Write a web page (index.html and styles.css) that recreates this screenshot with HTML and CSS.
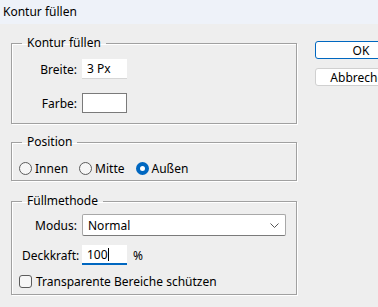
FILE: index.html
```html
<!DOCTYPE html>
<html lang="de">
<head>
    <meta charset="UTF-8">
    <meta name="viewport" content="width=device-width, initial-scale=1.0">
    <title>Kontur füllen</title>
    <link rel="stylesheet" href="styles.css">
</head>
<body>
    <div class="titlebar">Kontur füllen</div>
    <div class="dialog">
        <div class="groups">
            <fieldset class="group group-stroke">
                <legend>Kontur füllen</legend>
                <div class="row">
                    <label class="label">Breite:</label>
                    <div class="field">3 Px</div>
                </div>
                <div class="row">
                    <label class="label">Farbe:</label>
                    <div class="swatch"></div>
                </div>
            </fieldset>

            <fieldset class="group group-position">
                <legend>Position</legend>
                <div class="options">
                    <label class="option"><span class="radio"></span>Innen</label>
                    <label class="option"><span class="radio"></span>Mitte</label>
                    <label class="option"><span class="radio checked"></span>Außen</label>
                </div>
            </fieldset>

            <fieldset class="group group-blend">
                <legend>Füllmethode</legend>
                <div class="row row-select">
                    <label class="label">Modus:</label>
                    <div class="select">
                        <span>Normal</span>
                        <svg class="chevron" width="9" height="5" viewBox="0 0 9 5"><path d="M0.5 0.5 L4.5 4.5 L8.5 0.5" fill="none" stroke="#555" stroke-width="1"/></svg>
                    </div>
                </div>
                <div class="row">
                    <label class="label">Deckkraft:</label>
                    <div class="field focused">100<span class="caret"></span></div>
                    <span class="unit">%</span>
                </div>
                <label class="option check-row"><span class="checkbox"></span>Transparente Bereiche schützen</label>
            </fieldset>
        </div>

        <div class="buttons">
            <button class="btn primary">OK</button>
            <button class="btn">Abbrechen</button>
        </div>
    </div>
</body>
</html>
```

FILE: styles.css
```css
html, body { margin: 0; padding: 0; overflow: hidden; }
body { font-family: "Noto Sans", "Open Sans", sans-serif; font-size: 12px; color: #000; background: #eeeeee; width: 378px; height: 307px; }

.titlebar { height: 24px; line-height: 24px; padding-left: 3px; background: #eef2f9; }

.dialog { display: flex; padding: 11px 0 0 11px; gap: 18px; }
.groups { display: flex; flex-direction: column; width: 286px; }

.group { margin: 0; min-width: 0; border: 1px solid #a0a0a0; box-shadow: 1px 1px 0 #fff, inset 1px 1px 0 #fff; padding: 0 10px; }
.group legend { padding: 0 5px; line-height: 16px; }
.group-stroke { padding-top: 8px; padding-bottom: 10px; }
.group-position { margin-top: 10px; padding-top: 10px; padding-bottom: 4px; }
.group-blend { margin-top: 12px; padding-top: 5px; padding-bottom: 5px; }

.row { display: flex; align-items: center; gap: 5px; height: 20px; }
.row + .row { margin-top: 14px; }
.group-blend .row + .row { margin-top: 9px; }
.row-select { height: 22px; }
.label { width: 55px; text-align: right; flex-shrink: 0; }

.field { box-sizing: border-box; width: 45px; height: 20px; line-height: 20px; padding-left: 5px; background: #fff; border-bottom: 1px solid #d6d6d6; }
.field.focused { border-bottom: 2px solid #0067c0; line-height: 19px; }
.caret { display: inline-block; width: 1px; height: 13px; background: #000; vertical-align: -2px; }
.unit { margin-left: 1px; }
.swatch { box-sizing: border-box; width: 45px; height: 20px; background: #fff; border: 1px solid #7a7a7a; }

.select { box-sizing: border-box; width: 207px; height: 22px; display: flex; align-items: center; justify-content: space-between; padding: 0 6px 0 5px; background: #fff; border: 1px solid #a8a8a8; border-bottom-color: #7a7a7a; border-radius: 2px; }

.options { display: flex; gap: 11px; margin-left: -3px; height: 16px; align-items: center; }
.option { display: flex; align-items: center; gap: 3px; }
.radio { box-sizing: border-box; width: 13px; height: 13px; border-radius: 50%; border: 1px solid #5c5c5c; background: #f6f6f6; }
.radio.checked { border: 4px solid #0067c0; background: #fff; }

.check-row { margin: 8px 0 0 -3px; height: 16px; gap: 4px; }
.checkbox { box-sizing: border-box; width: 13px; height: 13px; border: 1px solid #5c5c5c; border-radius: 3px; background: #f6f6f6; }

.buttons { display: flex; flex-direction: column; gap: 9px; padding-top: 6px; }
.btn { box-sizing: border-box; width: 92px; height: 18px; padding: 0; font: inherit; color: #000; background: #fff; border: 1px solid #d0d0d0; border-radius: 3px; }
.btn.primary { border-color: #0067c0; }
```
